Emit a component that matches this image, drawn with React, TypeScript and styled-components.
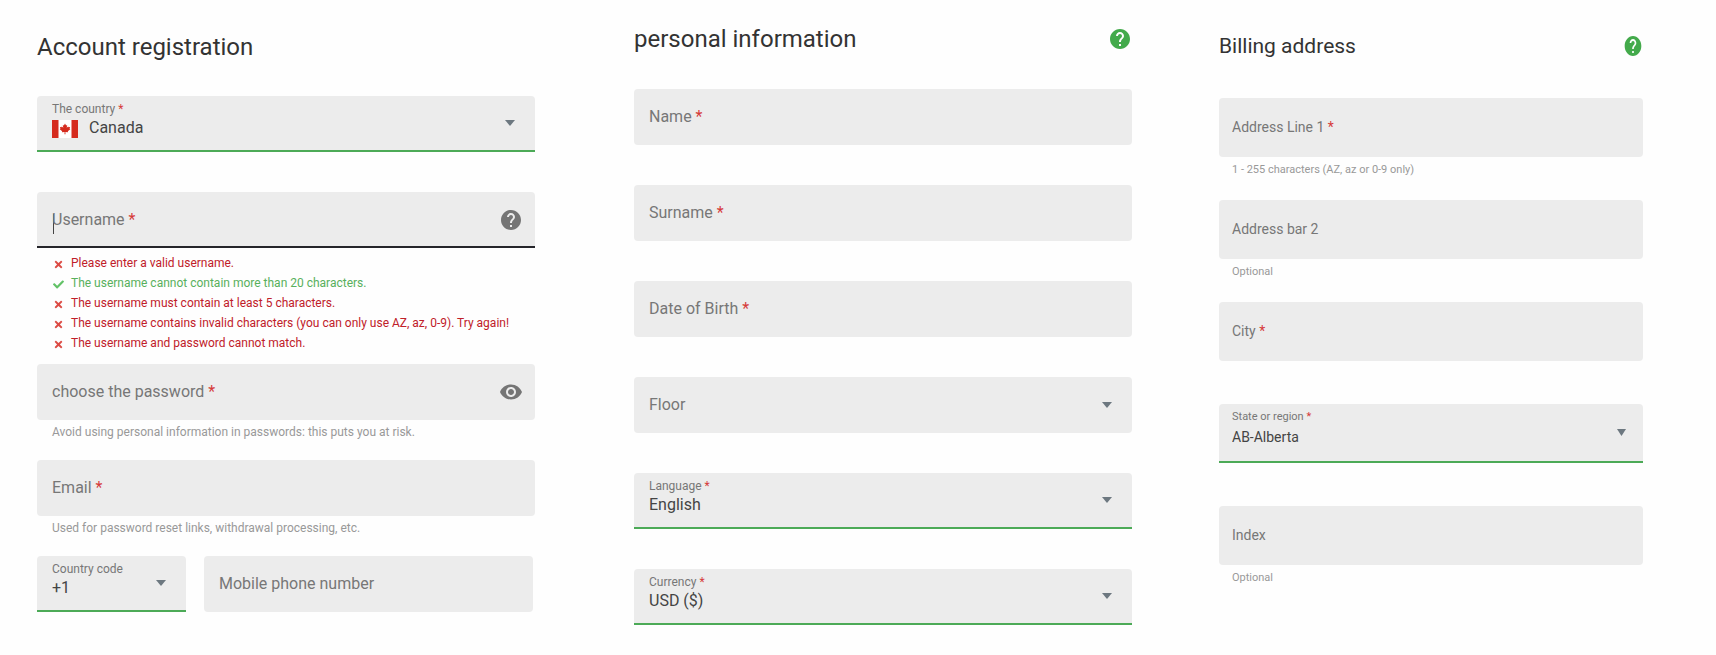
import React, { useId } from 'react';
import type { ReactNode } from 'react';
import styled, { createGlobalStyle, css, ThemeProvider } from 'styled-components';
import { MdHelp, MdVisibility } from 'react-icons/md';
import { FaCheck, FaTimes } from 'react-icons/fa';

const GlobalStyle = createGlobalStyle`
  *, *::before, *::after { box-sizing: border-box; }
  body { margin: 0; background: #fefefe; font-family: Roboto, "Liberation Sans", sans-serif; }
`;

const regular = {
  title: 24, text: 16, small: 12, box: 56, support: 40, inset: 15, hintTop: 4,
  head: 32, headGap: 33, top: 31, caretRight: 20, arrowW: 10, arrowH: 6,
};
const compact = {
  ...regular,
  title: 21, text: 14, small: 11, box: 59, support: 43, inset: 13, hintTop: 5,
  headGap: 36, top: 30, caretRight: 17, arrowW: 9, arrowH: 7,
};
const raised = { ...regular, top: 23, headGap: 34 };

const Page = styled.main`
  display: grid;
  grid-template-columns: 510fr 498fr 424fr;
  column-gap: 87px;
  align-items: start;
  padding: 0 73px 24px 37px;
`;

const PanelHead = styled.header`
  display: flex;
  align-items: center;
  justify-content: space-between;
  height: ${({ theme }) => theme.head}px;
  margin-bottom: ${({ theme }) => theme.headGap}px;
`;

const Title = styled.h2`
  margin: 0;
  font-size: ${({ theme }) => theme.title}px;
  line-height: 32px;
  font-weight: 400;
  color: #333;
`;

const HelpButton = styled.button<{ $narrow?: boolean }>`
  display: flex;
  border: 0;
  padding: 0;
  background: none;
  color: #43aa4b;
  svg { width: ${({ $narrow }) => ($narrow ? 20 : 24)}px; height: 24px; }
`;

const Box = styled.div<{ $tone?: 'valid' | 'active' }>`
  display: grid;
  height: ${({ theme }) => theme.box}px;
  background: #ececec;
  border-radius: 4px;
  > * { grid-area: 1 / 1; }
  ${({ $tone }) => $tone && css`
    border-radius: 4px 4px 0 0;
    border-bottom: 2px solid ${$tone === 'valid' ? '#4caa57' : '#25252a'};
  `}
`;

const Label = styled.label<{ $float?: boolean }>`
  z-index: 1;
  pointer-events: none;
  align-self: start;
  justify-self: start;
  padding-left: ${({ theme }) => theme.inset}px;
  color: #777;
  white-space: nowrap;
  ${({ $float, theme }) => $float ? css`
    padding-top: 5px;
    font-size: ${theme.small}px;
    line-height: 16px;
  ` : css`
    font-size: ${theme.text}px;
    line-height: ${theme.box}px;
  `}
`;

const Star = styled.span`
  color: #d63a3a;
`;

const fieldText = css`
  width: 100%;
  min-width: 0;
  height: 100%;
  margin: 0;
  border: 0;
  outline: 0;
  border-radius: 0;
  background: transparent;
  color: #444;
  font-family: inherit;
  font-size: ${({ theme }) => theme.text}px;
`;

const Input = styled.input`
  ${fieldText}
  padding: 0 48px 0 ${({ theme }) => theme.inset}px;
`;

const Select = styled.select<{ $indent?: number }>`
  ${fieldText}
  appearance: none;
  padding: 9px 40px 0 ${({ theme, $indent = 0 }) => theme.inset + $indent}px;
`;

const Arrow = styled.svg`
  align-self: center;
  justify-self: end;
  width: ${({ theme }) => theme.arrowW}px;
  height: ${({ theme }) => theme.arrowH}px;
  margin-right: ${({ theme }) => theme.caretRight}px;
  fill: #6d7880;
  pointer-events: none;
`;

const Trailing = styled.button`
  align-self: center;
  justify-self: end;
  display: flex;
  z-index: 1;
  margin-right: 12px;
  border: 0;
  padding: 0;
  background: none;
  color: #757575;
`;

const TextCursor = styled.span`
  align-self: center;
  width: 1px;
  height: 20px;
  margin-left: ${({ theme }) => theme.inset + 1}px;
  margin-top: 8px;
  background: #444;
  pointer-events: none;
`;

const FlagSvg = styled.svg`
  width: 26px;
  height: 18px;
  margin: 24px 0 0 ${({ theme }) => theme.inset}px;
  pointer-events: none;
`;

const Support = styled.div`
  min-height: ${({ theme }) => theme.support}px;
  padding: ${({ theme }) => theme.hintTop}px 0 0 ${({ theme }) => theme.inset}px;
  font-size: ${({ theme }) => theme.small}px;
  line-height: 16px;
  color: #999;
`;

const Panel = styled.section<{ $padRight?: number }>`
  min-width: 0;
  padding-top: ${({ theme }) => theme.top}px;
  padding-right: ${({ $padRight = 0 }) => $padRight}px;
  > :last-child ${Support} { min-height: 0; }
`;

const Checks = styled.ul`
  margin: 0;
  padding: 5px 0 11px 16px;
  list-style: none;
`;

const Check = styled.li<{ $ok?: boolean }>`
  display: flex;
  align-items: center;
  gap: 7px;
  font-size: 12px;
  line-height: 20px;
  white-space: nowrap;
  color: ${({ $ok }) => ($ok ? '#58b05c' : '#c02029')};
  svg { flex: none; width: 11px; height: 11px; margin-top: 2px; color: ${({ $ok }) => ($ok ? '#62c267' : '#dc4c45')}; }
`;

const PhoneRow = styled.div`
  display: grid;
  grid-template-columns: 149fr 329fr;
  gap: 18px;
  padding-right: 2px;
`;

type FieldProps = {
  label: string;
  required?: boolean;
  hint?: string;
  type?: string;
  active?: boolean;
  trailing?: ReactNode;
  children?: ReactNode;
};

function TextField({ label, required, hint, type = 'text', active, trailing, children }: FieldProps) {
  const id = useId();
  return (
    <div>
      <Box $tone={active ? 'active' : undefined}>
        <Input id={id} type={type} required={required} />
        <Label htmlFor={id}>{label}{required && <Star> *</Star>}</Label>
        {active && <TextCursor />}
        {trailing}
      </Box>
      {children ?? <Support>{hint}</Support>}
    </div>
  );
}

type SelectProps = { label: string; required?: boolean; value?: string; flag?: ReactNode };

function SelectField({ label, required, value, flag }: SelectProps) {
  const id = useId();
  return (
    <div>
      <Box $tone={value ? 'valid' : undefined}>
        <Select id={id} required={required} $indent={flag ? 37 : 0}>
          <option>{value ?? ''}</option>
        </Select>
        <Label htmlFor={id} $float={!!value}>{label}{required && <Star> *</Star>}</Label>
        {flag}
        <Arrow viewBox="0 0 10 6" preserveAspectRatio="none" aria-hidden="true"><path d="M0 0h10L5 6z" /></Arrow>
      </Box>
      <Support />
    </div>
  );
}

function CanadaFlag() {
  return (
    <FlagSvg viewBox="0 0 26 18" aria-hidden="true">
      <path fill="#fff" d="M0 0h26v18H0z" />
      <path fill="#d52b1e" d="M0 0h6.500v18H0zM19.500 0H26v18h-6.500z" />
      <path fill="#d52b1e" d="M13 3.600l1.100 2 1.100-.5-.5 2.600 1.500-1.300.4.900 1.500-.2-.5 1.600.7.500-2.500 2.100.3 1-2.700-.4.100 2.300h-1l.1-2.300-2.700.4.300-1-2.500-2.100.7-.5-.5-1.600 1.500.2.400-.9 1.500 1.300-.5-2.600 1.100.5z" />
    </FlagSvg>
  );
}

const usernameChecks = [
  { text: 'Please enter a valid username.' },
  { text: 'The username cannot contain more than 20 characters.', ok: true },
  { text: 'The username must contain at least 5 characters.' },
  { text: 'The username contains invalid characters (you can only use AZ, az, 0-9). Try again!' },
  { text: 'The username and password cannot match.' },
];

export default function App() {
  return (
    <>
      <GlobalStyle />
      <Page>
        <ThemeProvider theme={regular}>
          <Panel $padRight={12}>
            <PanelHead><Title>Account registration</Title></PanelHead>
            <SelectField label="The country" required value="Canada" flag={<CanadaFlag />} />
            <TextField
              label="Username"
              required
              active
              trailing={<Trailing type="button" aria-label="Username help"><MdHelp size={24} /></Trailing>}
            >
              <Checks>
                {usernameChecks.map(({ text, ok }) => (
                  <Check key={text} $ok={ok}>{ok ? <FaCheck /> : <FaTimes />}{text}</Check>
                ))}
              </Checks>
            </TextField>
            <TextField
              label="choose the password"
              type="password"
              required
              hint="Avoid using personal information in passwords: this puts you at risk."
              trailing={<Trailing type="button" aria-label="Show password"><MdVisibility size={24} /></Trailing>}
            />
            <TextField label="Email" type="email" required hint="Used for password reset links, withdrawal processing, etc." />
            <PhoneRow>
              <SelectField label="Country code" value="+1" />
              <TextField label="Mobile phone number" type="tel" />
            </PhoneRow>
          </Panel>
        </ThemeProvider>

        <ThemeProvider theme={raised}>
          <Panel>
            <PanelHead>
              <Title>personal information</Title>
              <HelpButton type="button" aria-label="Personal information help"><MdHelp /></HelpButton>
            </PanelHead>
            <TextField label="Name" required />
            <TextField label="Surname" required />
            <TextField label="Date of Birth" required />
            <SelectField label="Floor" />
            <SelectField label="Language" required value="English" />
            <SelectField label="Currency" required value="USD ($)" />
          </Panel>
        </ThemeProvider>

        <ThemeProvider theme={compact}>
          <Panel>
            <PanelHead>
              <Title>Billing address</Title>
              <HelpButton type="button" $narrow aria-label="Billing address help"><MdHelp preserveAspectRatio="none" /></HelpButton>
            </PanelHead>
            <TextField label="Address Line 1" required hint="1 - 255 characters (AZ, az or 0-9 only)" />
            <TextField label="Address bar 2" hint="Optional" />
            <TextField label="City" required />
            <SelectField label="State or region" required value="AB-Alberta" />
            <TextField label="Index" hint="Optional" />
          </Panel>
        </ThemeProvider>
      </Page>
    </>
  );
}
